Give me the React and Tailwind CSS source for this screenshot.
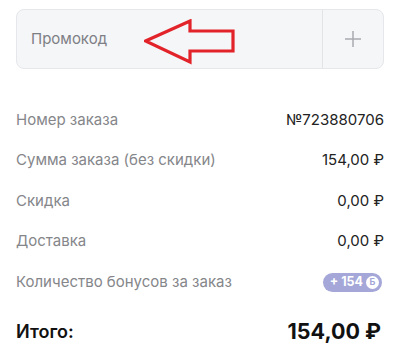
import React from "react";

const rows = [
  ["Номер заказа", "№723880706"],
  ["Сумма заказа (без скидки)", "154,00 ₽"],
  ["Скидка", "0,00 ₽"],
  ["Доставка", "0,00 ₽"],
];

export default function App() {
  return (
    <div className="w-[400px] h-[355px] bg-white overflow-hidden px-4 pt-[9px]" style={{ fontFamily: 'Inter, "Open Sans", sans-serif' }}>
      <div className="relative flex h-[60px] rounded-[8px] border border-[#e6e7ea] bg-[#f5f6f8]">
        <div className="flex-1 flex items-center pl-[14px] text-[15px] text-[#7e7f85]">Промокод</div>
        <div className="w-[61px] border-l border-[#e3e4e7] flex items-center justify-center">
          <svg width="16" height="16" viewBox="0 0 16 16">
            <path d="M8 0V16M0 8H16" stroke="#a9abb1" strokeWidth="1.5" />
          </svg>
        </div>
        <svg className="absolute left-[127px] top-[9px]" width="92" height="46" viewBox="0 0 92 46">
          <path d="M1.5 22 L46 2 L46 12 L89 12 L89 32 L46 32 L46 43 Z" fill="none" stroke="#e3232a" strokeWidth="3.2" strokeLinejoin="miter" />
        </svg>
      </div>
      <div className="mt-[41px] flex flex-col gap-[20.5px] text-[15px]">
        {rows.map(([l, v]) => (
          <div key={l} className="flex justify-between items-center h-[20px]">
            <span className="text-[#85868a]">{l}</span>
            <span className="text-[#222]">{v}</span>
          </div>
        ))}
        <div className="flex justify-between items-center h-[20px]">
          <span className="text-[#85868a]">Количество бонусов за заказ</span>
          <span className="flex items-center gap-[3px] h-[19px] mr-[2px] rounded-full bg-[#a4a7d8] pl-[7px] pr-[3px] text-white text-[12.5px] font-bold">
            + 154
            <span className="w-[13px] h-[13px] rounded-full bg-white text-[#a4a7d8] text-[9px] font-bold flex items-center justify-center">Б</span>
          </span>
        </div>
      </div>
      <div className="mt-[23px] flex justify-between items-center text-[#111]">
        <span className="text-[18px] font-semibold">Итого:</span>
        <span className="text-[21.5px] font-bold mr-[3px]">154,00 ₽</span>
      </div>
    </div>
  );
}
